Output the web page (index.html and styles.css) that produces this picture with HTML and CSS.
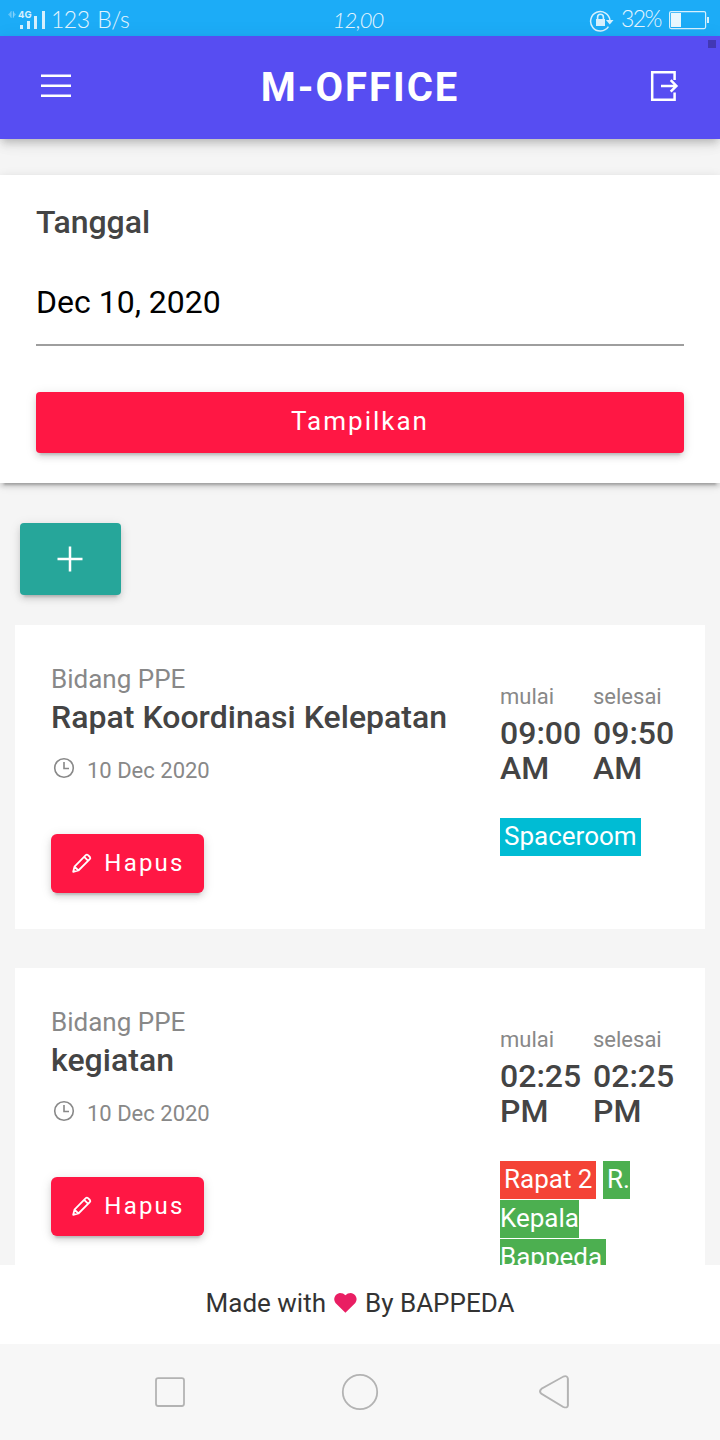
FILE: index.html
```html
<!DOCTYPE html>
<html lang="id">
<head>
<meta charset="utf-8">
<title>M-OFFICE</title>
<link rel="stylesheet" href="styles.css">
</head>
<body>
<div class="screen">
  <div class="status">
    <div class="status-left">
      <svg class="signal" width="40" height="36" viewBox="0 0 40 36">
        <path d="M8 12.5l3-3v6zM16 12.5l-3-3v6z" fill="#fff" opacity=".3"/>
        <path d="M11.2 9v7M13.3 9v7" stroke="#fff" opacity=".3"/>
        <path d="M20 23h3v4h-3zM27 19h3v8h-3zM34 14h3v13h-3z" fill="#d6f0fd"/>
        <text class="net" x="18" y="16.3">4G</text>
      </svg>
      <svg class="bar4" width="5" height="36" viewBox="0 0 5 36"><path d="M2 9h3v18H2z" fill="#d6f0fd"/></svg>
      <span class="speed">123 B/s</span>
    </div>
    <span class="clock">12,00</span>
    <div class="status-right">
      <svg width="26" height="36" viewBox="0 0 26 36" fill="none" stroke="#d6f0fd" stroke-width="1.5">
        <path d="M19.4 24.7A9.7 9.7 0 1 1 21 18.5"/>
        <path d="M17 18h7.5l-3.7 4.5z" fill="#d6f0fd" stroke="none"/>
        <path d="M7 17h9v7H7z" fill="#d6f0fd" stroke="none"/>
        <path d="M8.6 17v-1.8a2.9 2.9 0 0 1 5.8 0V17" stroke-width="1.6"/>
      </svg>
      <span class="percent">32%</span>
      <svg class="battery" width="41" height="36" viewBox="0 0 41 36">
        <rect x=".6" y="9.6" width="36" height="17" rx="1.5" fill="none" stroke="#d6f0fd" stroke-width="1.2"/>
        <path d="M2 11h10v14H2z" fill="#e8f7fe"/>
        <path d="M38 15h2v6h-2z" fill="#d6f0fd"/>
      </svg>
    </div>
  </div>

  <header class="header">
    <svg width="32" height="32" viewBox="0 0 32 32" stroke="#fff" stroke-width="2.5"><path d="M1 5.8h30M1 15.8h30M1 25.8h30"/></svg>
    <h1 class="brand">M-OFFICE</h1>
    <svg class="logout" width="32" height="32" viewBox="0 0 32 32" fill="none" stroke="#fff" stroke-width="2.5">
      <path d="M26.6 10V2.2H4.2v27.5h22.4V22.5"/><path d="M13 15.9h16M22.7 10.2l5.7 5.7-5.7 5.7"/>
    </svg>
    <span class="marker"></span>
  </header>

  <main class="content">
    <section class="filter">
      <div class="label">Tanggal</div>
      <div class="date-input">Dec 10, 2020</div>
      <button class="btn show">Tampilkan</button>
    </section>

    <button class="btn add"><svg width="28" height="28" viewBox="0 0 28 28" stroke="#fff" stroke-width="2.5"><path d="M1.5 14h25M14 1.5v25"/></svg></button>

    <article class="event">
      <div class="info">
        <div class="dept">Bidang PPE</div>
        <div class="title">Rapat Koordinasi Kelepatan</div>
        <div class="day"><svg class="clock-icon" width="22" height="22" viewBox="0 0 22 22" fill="none" stroke="#888" stroke-width="1.6"><circle cx="11" cy="11" r="9.3"/><path d="M11 5v6.5h5"/></svg>10 Dec 2020</div>
        <button class="btn remove"><svg class="pencil" width="20" height="20" viewBox="0 0 20 20" fill="none" stroke="#fff" stroke-width="1.8" stroke-linejoin="round"><path d="M1.2 18.8l1.3-5.2L13.8 2.2q1-1 2.2-.1l1.9 1.9q.9 1.2-.1 2.2L6.4 17.5zM2.5 13.6l3.9 3.9M12.2 3.8l4 4"/></svg>Hapus</button>
      </div>
      <div class="schedule">
        <div class="times">
          <div><div class="caption">mulai</div><div class="time">09:00 AM</div></div>
          <div><div class="caption">selesai</div><div class="time">09:50 AM</div></div>
        </div>
        <div class="rooms"><span class="badge cyan">Spaceroom</span></div>
      </div>
    </article>

    <article class="event">
      <div class="info">
        <div class="dept">Bidang PPE</div>
        <div class="title">kegiatan</div>
        <div class="day"><svg class="clock-icon" width="22" height="22" viewBox="0 0 22 22" fill="none" stroke="#888" stroke-width="1.6"><circle cx="11" cy="11" r="9.3"/><path d="M11 5v6.5h5"/></svg>10 Dec 2020</div>
        <button class="btn remove"><svg class="pencil" width="20" height="20" viewBox="0 0 20 20" fill="none" stroke="#fff" stroke-width="1.8" stroke-linejoin="round"><path d="M1.2 18.8l1.3-5.2L13.8 2.2q1-1 2.2-.1l1.9 1.9q.9 1.2-.1 2.2L6.4 17.5zM2.5 13.6l3.9 3.9M12.2 3.8l4 4"/></svg>Hapus</button>
      </div>
      <div class="schedule">
        <div class="times">
          <div><div class="caption">mulai</div><div class="time">02:25 PM</div></div>
          <div><div class="caption">selesai</div><div class="time">02:25 PM</div></div>
        </div>
        <div class="rooms"><span class="badge red">Rapat 2</span> <span class="badge green">R. Kepala Bappeda</span></div>
      </div>
    </article>
  </main>

  <footer class="footer">
    <span>Made with</span>
    <svg class="heart" width="24" height="22" viewBox="0 0 24 22"><path d="M12.4 20.8L2.5 10.9A6.3 6.3 0 0 1 6.9.9q3.5 0 5.5 2.4Q14.400 .9 17.9.9a6.3 6.3 0 0 1 4.400 10z" fill="#e91e63"/></svg>
    <span>By BAPPEDA</span>
  </footer>

  <nav class="navbar">
    <svg width="40" height="40" viewBox="0 0 40 40"><rect x="6" y="6.2" width="28" height="27.8" rx="2.2"/></svg>
    <svg width="40" height="40" viewBox="0 0 40 40"><circle cx="20" cy="20" r="17.2"/></svg>
    <svg width="40" height="40" viewBox="0 0 40 40"><path d="M30.7 3.7L10.9 16.5q-2.6 2.6 0 5.3L30.7 35.7q3.9 1.500 4.2-1.6V6q-.3-3.8-4.2-2.3z" transform="matrix(1.1 0 0 .95 -.500 1.100)"/></svg>
  </nav>
</div>
</body>
</html>
```
FILE: styles.css
```css
* { box-sizing: border-box; }

body {
  margin: 0;
  font-family: Roboto, sans-serif;
  color: #444;
}

svg { display: block; flex: none; }

.screen {
  width: 720px;
  height: 1440px;
  display: flex;
  flex-direction: column;
  overflow: hidden;
  background: #f5f5f5;
}

.status {
  height: 36px;
  flex: none;
  display: grid;
  grid-template-columns: 1fr auto 1fr;
  align-items: center;
  background: #1cacf7;
  color: #e4f5fe;
  font-family: Lato, sans-serif;
  font-weight: 300;
  font-size: 23px;
  line-height: 36px;
}

.status-left, .status-right { display: flex; align-items: center; }
.status-right { justify-content: flex-end; padding-right: 10px; }
.net { font: bold 9.5px Inter, sans-serif; fill: #d6f0fd; }
.speed { margin-left: 6px; letter-spacing: -0.5px; word-spacing: 2px; padding-bottom: 2px; }
.clock { font-style: italic; font-size: 22px; letter-spacing: -1px; margin-right: 4px; }
.percent { margin-left: 6px; letter-spacing: -1.5px; padding-bottom: 3px; }
.battery { margin-left: 8px; }

.header {
  position: relative;
  z-index: 2;
  height: 103px;
  flex: none;
  display: flex;
  align-items: center;
  justify-content: space-between;
  padding: 0 40px 3px;
  background: #574df2;
  box-shadow: 0 4px 8px -2px rgba(0, 0, 0, .2), 0 8px 10px 0 rgba(0, 0, 0, .06), 0 2px 20px 0 rgba(0, 0, 0, .06);
}

.brand {
  margin: 0;
  color: #fff;
  font-size: 40px;
  font-weight: 700;
  letter-spacing: 2px;
  padding-top: 2px;
}

.marker {
  position: absolute;
  top: 4px;
  right: 4px;
  width: 8px;
  height: 8px;
  background: #4238b5;
}

.content {
  height: 1126px;
  flex: none;
  overflow: hidden;
  padding-top: 36px;
}

.filter {
  height: 308px;
  padding: 27px 36px 30px;
  background: #fff;
  box-shadow: 0 6px 2px -4px rgba(0, 0, 0, .2), 0 4px 4px 0 rgba(0, 0, 0, .1), 0 2px 10px 0 rgba(0, 0, 0, .12);
}

.label { font-size: 32px; font-weight: 500; line-height: 40px; }

.date-input {
  margin-top: 40px;
  padding-bottom: 22px;
  border-bottom: 2px solid #9e9e9e;
  color: #000;
  font-size: 32px;
  line-height: 40px;
}

.btn {
  display: flex;
  align-items: center;
  justify-content: center;
  border: 0;
  border-radius: 4px;
  padding: 0;
  color: #fff;
  background: #ff1744;
  font-family: Roboto, sans-serif;
  box-shadow: 0 6px 2px -4px rgba(0, 0, 0, .14), 0 4px 6px 0 rgba(0, 0, 0, .1), 0 2px 12px 0 rgba(0, 0, 0, .1);
}

.show {
  width: 100%;
  height: 61px;
  margin-top: 46px;
  padding-bottom: 3px;
  font-size: 26px;
  letter-spacing: 2px;
}

.add {
  width: 101px;
  height: 72px;
  margin: 40px 0 30px 20px;
  padding: 0 1px 1px 0;
  background: #26a69a;
}

.event {
  display: flex;
  min-height: 304px;
  margin: 0 15px 39px;
  padding: 35px 30px 36px 36px;
  background: #fff;
}

.info { width: 449px; flex: none; }
.dept { font-size: 26px; line-height: 35px; padding-top: 2px; color: #888; }
.title { font-size: 32px; font-weight: 500; line-height: 40px; letter-spacing: 0.03px; }

.day {
  display: flex;
  margin-top: 19px;
  padding-left: 2px;
  color: #888;
  font-size: 22px;
  line-height: 30px;
}

.clock-icon { margin: 1px 12px 0 0; }

.remove {
  width: 153px;
  height: 59px;
  margin-top: 48px;
  padding: 0 0 2px 2px;
  border-radius: 6px;
  font-size: 24px;
  letter-spacing: 2.2px;
}

.pencil { margin-right: 12px; }

.schedule { padding-top: 22px; }
.times { display: grid; grid-template-columns: 84px 84px; column-gap: 9px; }
.caption { color: #888; font-size: 22px; line-height: 30px; margin-bottom: 4px; }
.time { font-size: 32px; font-weight: 500; line-height: 35px; }
.rooms { width: 146px; margin-top: 31px; font-size: 26px; line-height: 39px; }
.badge { padding: 3px 4px 5px; color: #fff; }
.cyan { background: #00bcd4; }
.red { background: #f44336; }
.green { background: #4caf50; }

.footer {
  height: 79px;
  flex: none;
  display: flex;
  align-items: center;
  justify-content: center;
  padding-bottom: 3px;
  background: #fff;
  color: #333;
  font-size: 26px;
}

.heart { margin: 0 8px 0 7px; }

.navbar {
  height: 96px;
  flex: none;
  display: flex;
  align-items: center;
  justify-content: space-between;
  padding: 0 150px;
  background: #f7f7f7;
}

.navbar svg { fill: none; stroke: #b3b3b3; stroke-width: 1.8; }
```
